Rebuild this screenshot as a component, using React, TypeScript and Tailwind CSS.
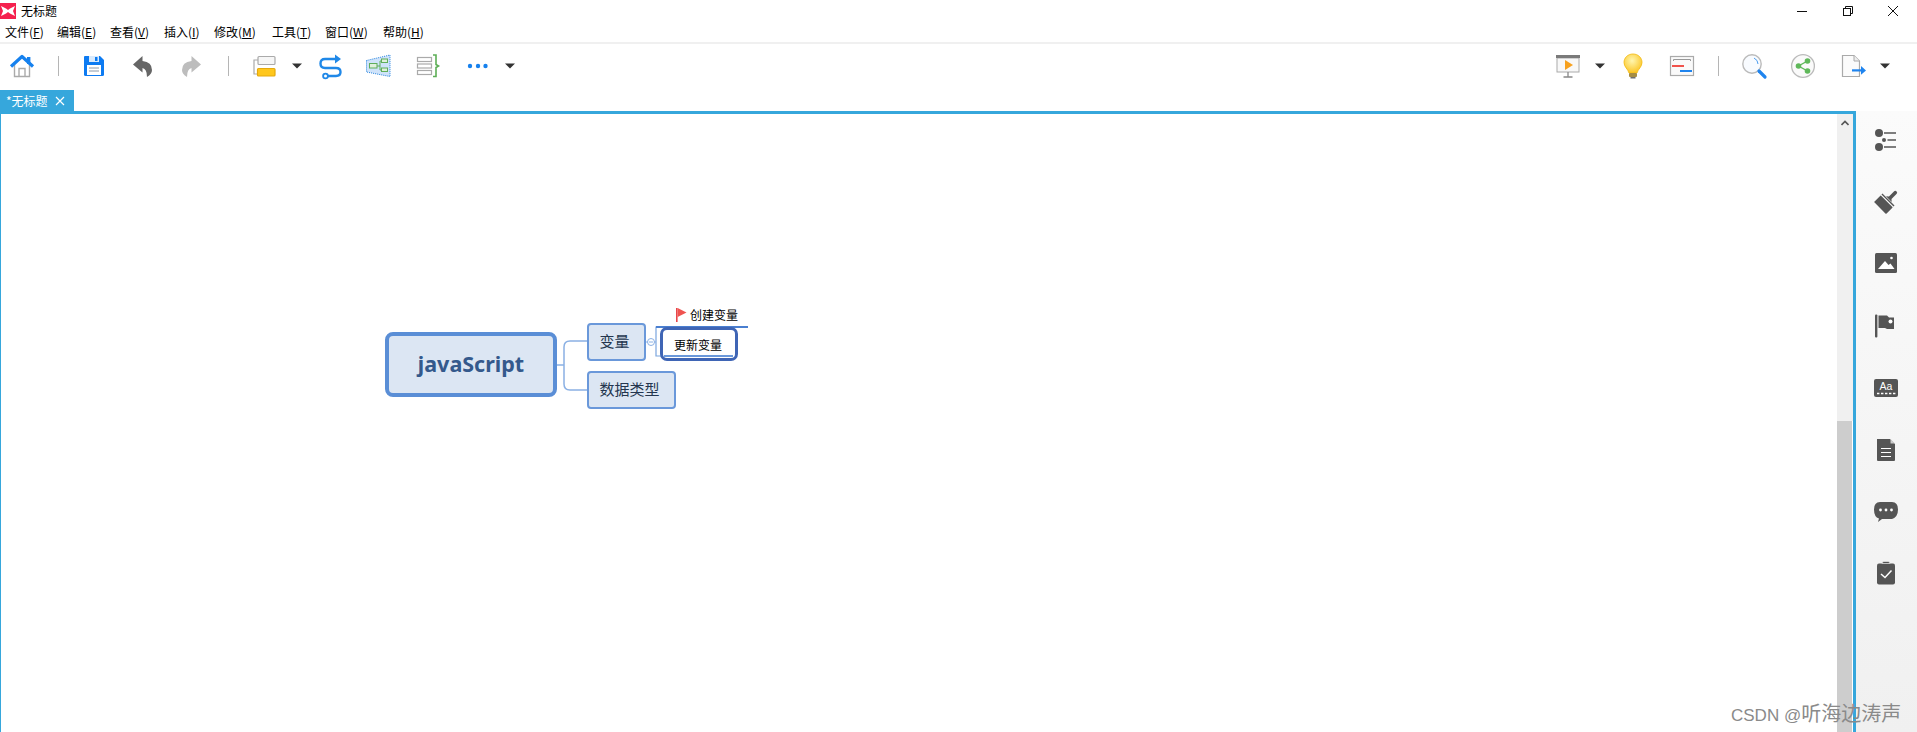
import React from "react";

const cjk = { fontFamily: '"Noto Sans CJK SC", "Liberation Sans", sans-serif' };

function Box({ children }: { children: React.ReactNode }) {
  return (
    <svg width="32" height="32" viewBox="0 0 32 32" className="shrink-0 block">
      {children}
    </svg>
  );
}

function Caret({ className }: { className: string }) {
  return (
    <svg width="10" height="6" viewBox="0 0 10 6" className={`shrink-0 block ${className}`}>
      <path d="M0 0.5H10L5 5.5Z" fill="#333" />
    </svg>
  );
}

function Sep({ className }: { className: string }) {
  return (
    <div className={`w-8 flex justify-center shrink-0 ${className}`}>
      <div className="w-px h-5 bg-[#b5b5b5]" />
    </div>
  );
}

const Home = () => (
  <Box>
    <path d="M8.5 14V26.5H23.5V14" fill="#fff" stroke="#aaa" strokeWidth="1.4" />
    <path d="M13 26V18.5H19V26" fill="none" stroke="#aaa" strokeWidth="1.4" />
    <rect x="21" y="7" width="3.4" height="7" fill="#1681ee" />
    <path d="M5 16.5L16 6.5L27 16.5" fill="none" stroke="#1681ee" strokeWidth="3.2" strokeLinejoin="round" />
  </Box>
);
const Save = () => (
  <Box>
    <path d="M7 6H22L26 10V24.5Q26 26 24.5 26H7.5Q6 26 6 24.5V7Q6 6 7 6Z" fill="#0d7bf2" />
    <rect x="11" y="6" width="10" height="6" fill="#d9eafc" />
    <rect x="17" y="7" width="2.5" height="4" fill="#0d7bf2" />
    <rect x="9" y="15" width="14" height="10" fill="#fff" />
    <path d="M11 18H21M11 21H21" stroke="#8a98a8" strokeWidth="1" />
  </Box>
);
const Undo = () => (
  <Box>
    <path d="M7 14.5L16.5 6V11Q26 12 26 20Q26 24 21 27Q21 19 16.5 18V22.5Z" fill="#666" />
  </Box>
);
const Redo = () => (
  <Box>
    <path d="M25 14.5L15.5 6V11Q6 12 6 20Q6 24 11 27Q11 19 15.5 18V22.5Z" fill="#bdbdbd" />
  </Box>
);
const Topic = () => (
  <Box>
    <path d="M9 10H5V24H8" fill="none" stroke="#aaa" strokeWidth="1.2" />
    <rect x="9" y="6.5" width="17" height="8" rx="1" fill="#f6f6f6" stroke="#aaa" strokeWidth="1.2" />
    <rect x="8.5" y="18.5" width="17.5" height="7.5" rx="1" fill="#ffc71c" stroke="#e5a90c" strokeWidth="1.2" />
  </Box>
);
const Relation = () => (
  <Box>
    <path d="M22 9H11Q6.5 9 6.5 13.5T11 18H22Q26.5 18 26.5 22T22 26H14" fill="none" stroke="#1f88e8" strokeWidth="2.4" />
    <path d="M21 4.5L27 9L21 13.5Z" fill="#1f88e8" />
    <circle cx="11.5" cy="26" r="2.4" fill="#fff" stroke="#1f88e8" strokeWidth="1.8" />
  </Box>
);
const Boundary = () => (
  <Box>
    <path d="M4.5 10.5L28 5V26.5L4.5 22Z" fill="#cfe3fa" stroke="#2a86e0" strokeWidth="1" strokeDasharray="1 1" />
    <path d="M15 16H18M18 11H19.5M18 20H19.5M18 11V20" fill="none" stroke="#5fae5a" strokeWidth="1" />
    <rect x="7.5" y="13.5" width="7.5" height="4.5" fill="#dff0dc" stroke="#5fae5a" />
    <rect x="19.5" y="9" width="6" height="3.5" fill="#dff0dc" stroke="#5fae5a" />
    <rect x="19.5" y="18" width="6" height="3.5" fill="#dff0dc" stroke="#5fae5a" />
  </Box>
);
const Summary = () => (
  <Box>
    <rect x="6.5" y="7.5" width="14" height="4" fill="#fff" stroke="#aaa" strokeWidth="1.2" />
    <rect x="6.5" y="14" width="14" height="4" fill="#fff" stroke="#aaa" strokeWidth="1.2" />
    <rect x="6.5" y="20.5" width="14" height="4" fill="#fff" stroke="#aaa" strokeWidth="1.2" />
    <path d="M22 5H25V14.5L27.5 16L25 17.5V26.5H22" fill="none" stroke="#5cae55" strokeWidth="1.6" />
  </Box>
);
const Dots = () => (
  <Box>
    <circle cx="8" cy="16" r="2.2" fill="#1681ee" />
    <circle cx="16" cy="16" r="2.2" fill="#1681ee" />
    <circle cx="23.5" cy="16" r="2.2" fill="#1681ee" />
  </Box>
);
const Present = () => (
  <Box>
    <rect x="5" y="8" width="22" height="14" fill="#f8f8f8" stroke="#aaa" strokeWidth="1" />
    <rect x="4" y="5" width="24" height="3" fill="#7a7a7a" />
    <path d="M13 10L21 15L13 20Z" fill="#f7a11e" />
    <path d="M16 22V26.5M11.5 27H20.5" stroke="#888" strokeWidth="1.3" />
  </Box>
);
const Bulb = () => (
  <Box>
    <defs>
      <radialGradient id="bulbg" cx="0.45" cy="0.35" r="0.7">
        <stop offset="0" stopColor="#fff6b0" />
        <stop offset="1" stopColor="#fbc21a" />
      </radialGradient>
    </defs>
    <path d="M16 4C10.5 4 7 8 7 12.5C7 17 11 19 12 23H20C21 19 25 17 25 12.5C25 8 21.5 4 16 4Z" fill="url(#bulbg)" stroke="#f3b90f" strokeWidth="0.8" />
    <rect x="12" y="23" width="8" height="4" rx="1" fill="#a68d43" />
    <rect x="13.5" y="27" width="5" height="1.5" fill="#6e6e6e" />
  </Box>
);
const Gantt = () => (
  <Box>
    <rect x="4.5" y="6.5" width="23" height="19" fill="#fafafa" stroke="#aaa" strokeWidth="1.2" />
    <path d="M7.5 11V9.5H24.5V11" fill="none" stroke="#999" strokeWidth="1" />
    <rect x="6" y="15" width="12" height="2" fill="#f1534c" />
    <rect x="14" y="20" width="12" height="2" fill="#1f84ee" />
  </Box>
);
const Search = () => (
  <Box>
    <circle cx="14" cy="14" r="9.2" fill="#f8fbff" stroke="#bbb" strokeWidth="1.4" />
    <path d="M16 8Q20 10 20 14" fill="none" stroke="#4a9cf0" strokeWidth="1" />
    <path d="M21 21L27 27" stroke="#1f84ee" strokeWidth="3.2" strokeLinecap="round" />
  </Box>
);
const Share = () => (
  <Box>
    <circle cx="16" cy="16" r="11.4" fill="#fafafa" stroke="#bbb" strokeWidth="1.3" />
    <path d="M20.5 11L11.5 16L20.5 21" fill="none" stroke="#5fb85a" strokeWidth="1.4" />
    <circle cx="20.5" cy="11" r="2.8" fill="#5fb85a" />
    <circle cx="11.5" cy="16" r="2.8" fill="#5fb85a" />
    <circle cx="20.5" cy="21" r="2.8" fill="#5fb85a" />
  </Box>
);
const ExportIcon = () => (
  <Box>
    <path d="M5.5 5.5H17L22.5 11V26.5H5.5Z" fill="#fbfbfb" stroke="#aaa" strokeWidth="1.2" />
    <path d="M17 5.5V11H22.5" fill="#eee" stroke="#aaa" strokeWidth="1" />
    <rect x="15" y="19.3" width="10" height="2.2" fill="#1f84ee" />
    <path d="M24 16L29 20.4L24 24.8Z" fill="#1f84ee" />
  </Box>
);

const sideFill = "#555555";
const sideIcons = [
  <Box key="outline">
    <circle cx="9" cy="9" r="4" fill={sideFill} />
    <circle cx="14" cy="16" r="2" fill={sideFill} />
    <circle cx="9" cy="23" r="4" fill={sideFill} />
    <path d="M14 9H26M17.5 16H26M14 23H26" stroke={sideFill} strokeWidth="1.6" />
  </Box>,
  <Box key="brush">
    <g transform="rotate(45 16 16)">
      <rect x="7.5" y="15" width="17" height="9.5" rx="0.5" fill={sideFill} />
      <rect x="7.5" y="12.5" width="17" height="1.4" fill={sideFill} />
      <path d="M12 12L14.2 10V3Q14.2 1 16 1T17.8 3V10L20 12Z" fill={sideFill} />
    </g>
  </Box>,
  <Box key="image">
    <rect x="5" y="5" width="22" height="20" rx="1.5" fill={sideFill} />
    <path d="M8 21L15 13L18.5 17L20.5 15.5L24.5 21Z" fill="#fff" />
    <circle cx="21.5" cy="10" r="1.3" fill="#fff" />
  </Box>,
  <Box key="flag">
    <rect x="5" y="4.5" width="2.4" height="23" rx="1" fill={sideFill} />
    <path d="M8.5 5.5H17L19 7.5H24V19H17L15 18H8.5Z" fill={sideFill} />
    <circle cx="20.5" cy="11.5" r="2" fill="#fff" />
  </Box>,
  <Box key="text">
    <rect x="4" y="7" width="24" height="18" rx="2" fill={sideFill} />
    <text x="16" y="18" textAnchor="middle" fontSize="10.5" fill="#fff" fontFamily="Liberation Sans">
      Aa
    </text>
    <path d="M7 21.5H26" stroke="#fff" strokeWidth="1.6" strokeDasharray="2.4 1.6" />
  </Box>,
  <Box key="note">
    <path d="M7 5H20L25 10V26Q25 27 24 27H8Q7 27 7 26Z" fill={sideFill} />
    <path d="M20.5 5L25 9.5H20.5Z" fill="#ccc" />
    <path d="M11 14.5H21M11 18.5H21M11 22.5H21" stroke="#fff" strokeWidth="1.1" />
  </Box>,
  <Box key="comment">
    <path d="M10 6H22Q28 6 28 13.5T22 23H12L8 26L9 22.5Q4 21 4 13.5T10 6Z" fill={sideFill} />
    <circle cx="10.5" cy="14" r="1.4" fill="#fff" />
    <circle cx="16" cy="14" r="1.4" fill="#fff" />
    <circle cx="21.5" cy="14" r="1.4" fill="#fff" />
  </Box>,
  <Box key="task">
    <rect x="7" y="5.5" width="18" height="21" rx="2" fill={sideFill} />
    <path d="M12 5.5Q12 3.5 14 3.5H18Q20 3.5 20 5.5H12Z" fill={sideFill} stroke="#f4f4f4" strokeWidth="0.6" />
    <path d="M11 16L15 19.5L21.5 12.5" fill="none" stroke="#fff" strokeWidth="1.5" />
  </Box>,
];

const menus: [string, string, string][] = [
  ["文件", "F", "w-[52px]"],
  ["编辑", "E", "w-[53px]"],
  ["查看", "V", "w-[54px]"],
  ["插入", "I", "w-[50px]"],
  ["修改", "M", "w-[58px]"],
  ["工具", "T", "w-[53px]"],
  ["窗口", "W", "w-[58px]"],
  ["帮助", "H", "w-[53px]"],
];

export default function App() {
  return (
    <div className="w-[1917px] h-[732px] overflow-hidden bg-white flex flex-col relative text-black" style={cjk}>
      {/* title bar */}
      <div className="h-[22px] flex items-center shrink-0">
        <svg width="16" height="16" viewBox="0 0 16 16" className="block shrink-0">
          <rect width="16" height="16" fill="#f5214e" />
          <path d="M1 3L6 5.5L8 7L10 5.5L15 3L13 8L15 13L10 10.5L8 9L6 10.5L1 13L3 8Z" fill="#fff" />
        </svg>
        <span className="ml-[5px] text-[12px] leading-none">无标题</span>
        <div className="ml-auto flex items-center gap-[33.5px] pr-[18px]">
          <svg width="12" height="12" viewBox="0 0 12 12" className="block">
            <path d="M1 6.5H11" stroke="#111" strokeWidth="1" />
          </svg>
          <svg width="12" height="12" viewBox="0 0 12 12" className="block">
            <rect x="1.5" y="3.5" width="7" height="7" fill="none" stroke="#111" />
            <path d="M3.5 3.5V1.5H10.5V8.5H8.5" fill="none" stroke="#111" />
          </svg>
          <svg width="12" height="12" viewBox="0 0 12 12" className="block">
            <path d="M1 1L11 11M11 1L1 11" stroke="#111" strokeWidth="1" />
          </svg>
        </div>
      </div>
      {/* menu */}
      <div className="h-[20px] flex items-center pl-[5px] text-[12px] leading-none shrink-0">
        {menus.map(([n, k, w]) => (
          <span key={k} className={`whitespace-nowrap shrink-0 ${w}`}>
            {n}(<span className="underline">{k}</span>)
          </span>
        ))}
      </div>
      <div className="h-[2px] bg-[#f0f0f0] shrink-0" />
      {/* toolbar */}
      <div className="h-[46px] flex items-center shrink-0 pl-[6px] pr-[27px] pb-[2px]">
        <Home />
        <Sep className="ml-[4px]" />
        <div className="ml-[4px]"><Save /></div>
        <div className="ml-[16px]"><Undo /></div>
        <div className="ml-[18px]"><Redo /></div>
        <Sep className="ml-[4px]" />
        <div className="ml-[5px]"><Topic /></div>
        <Caret className="ml-[11px]" />
        <div className="ml-[12px]"><Relation /></div>
        <div className="ml-[16px]"><Boundary /></div>
        <div className="ml-[17px]"><Summary /></div>
        <div className="ml-[19px]"><Dots /></div>
        <Caret className="ml-[11px]" />

        <div className="ml-auto"><Present /></div>
        <Caret className="ml-[11px]" />
        <div className="ml-[12px]"><Bulb /></div>
        <div className="ml-[17px]"><Gantt /></div>
        <Sep className="ml-[4px]" />
        <div className="ml-[4px]"><Search /></div>
        <div className="ml-[17px]"><Share /></div>
        <div className="ml-[18px]"><ExportIcon /></div>
        <Caret className="ml-[11px]" />
      </div>
      {/* tabs */}
      <div className="h-[21px] flex shrink-0">
        <div className="w-[74px] bg-[#36a7dc] text-white flex items-center pl-[6px] text-[12px] leading-none">
          <span>*无标题</span>
          <svg width="10" height="10" viewBox="0 0 10 10" className="ml-[7px] block">
            <path d="M1 1L9 9M9 1L1 9" stroke="#fff" strokeWidth="1.2" />
          </svg>
        </div>
      </div>
      {/* body */}
      <div className="flex-1 flex min-h-0">
        <div className="flex-1 flex border-t-[3px] border-l border-r-[3px] border-[#36a7dc] relative">
          <div className="flex-1 relative">
            <svg width="420" height="120" viewBox="0 0 420 120" className="absolute left-[549px] top-[200px]">
              <path d="M6 51H14" stroke="#8ab0e4" strokeWidth="1.5" fill="none" />
              <path d="M38 27H20Q14 27 14 33V70Q14 76 20 76H38" stroke="#8ab0e4" strokeWidth="1.5" fill="none" />
              <path d="M112 13H106V42H112" stroke="#7ba5de" strokeWidth="1.2" fill="none" />
              <path d="M106 13H198" stroke="#4a7fd0" strokeWidth="2" fill="none" />
              <circle cx="101" cy="28" r="3.5" fill="#fff" stroke="#8ab0e4" strokeWidth="1" />
              <path d="M99 28H103" stroke="#8ab0e4" strokeWidth="1" />
              <path d="M96 28H97.5M104.5 28H106" stroke="#8ab0e4" strokeWidth="1" />
            </svg>

            <div className="absolute left-[384px] top-[218px] w-[172px] h-[65px] box-border border-4 border-[#5a8ed6] rounded-[8px] bg-[#dce6f3] flex items-center justify-center">
              <span className="text-[21.5px] font-bold text-[#34598c]" style={{ fontFamily: '"Noto Sans", sans-serif' }}>
                javaScript
              </span>
            </div>
            <div className="absolute left-[586px] top-[209px] w-[59px] h-[38px] box-border border-2 border-[#6a98da] rounded-[4px] bg-[#dce6f3] flex items-center justify-center text-[15px] text-[#24364f] pr-[4px] pb-[2px]">
              变量
            </div>
            <div className="absolute left-[586px] top-[257px] w-[89px] h-[38px] box-border border-2 border-[#6a98da] rounded-[4px] bg-[#dce6f3] flex items-center justify-center text-[15px] text-[#24364f] pr-[4px] pb-[2px]">
              数据类型
            </div>
            <div className="absolute left-[659px] top-[213px] w-[78px] h-[34px] box-border border-[3px] border-[#3f65b5] rounded-[7px] bg-white flex items-center justify-center text-[12px] leading-none pr-[2px]">
              <span className="mt-[1px]">更新变量</span>
              <div className="absolute left-[1px] right-[2px] bottom-[1px] h-[2px] bg-[#6a98da]" />
            </div>
            <div className="absolute left-[675px] top-[194px] flex items-center gap-[3px] text-[12px] leading-none">
              <svg width="11" height="14" viewBox="0 0 11 14" className="block">
                <rect x="0" y="0" width="1.6" height="14" fill="#e8464a" />
                <path d="M1.6 0L10.5 4.5L1.6 9Z" fill="#ef5350" />
              </svg>
              <span>创建变量</span>
            </div>
          </div>
          {/* scrollbar */}
          <div className="w-4 flex flex-col shrink-0">
            <div className="h-[307px] bg-[#f0f0f0] flex justify-center pt-[6px]">
              <svg width="8" height="6" viewBox="0 0 8 6" className="block">
                <path d="M0.5 5L4 1.5L7.5 5" fill="none" stroke="#555" strokeWidth="1.6" />
              </svg>
            </div>
            <div className="flex-1 bg-[#cdcdcd] mr-px" />
          </div>
        </div>
        {/* side panel */}
        <div className="w-[61px] shrink-0 bg-gradient-to-b from-[#fbfbfb] to-[#f0f0f0] flex flex-col items-center gap-[30px] pt-[13px] pr-[2px]">
          {sideIcons}
        </div>
      </div>
      {/* watermark */}
      <div className="absolute left-[1731px] top-[700px] flex items-baseline whitespace-nowrap text-[#8a8a8a]">
        <span className="text-[17px] leading-[26px]" style={{ fontFamily: '"Liberation Sans", sans-serif' }}>CSDN @</span>
        <span className="text-[20px] leading-[26px]">听海边涛声</span>
      </div>
    </div>
  );
}
